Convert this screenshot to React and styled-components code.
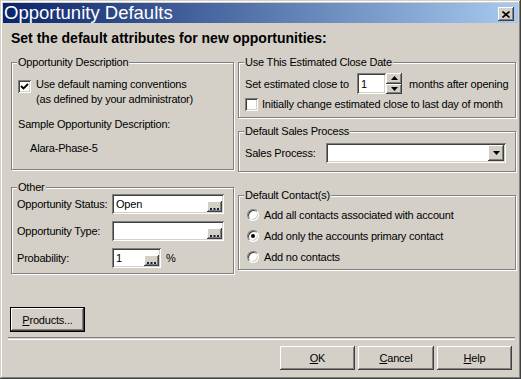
import React from "react";
import styled, { createGlobalStyle } from "styled-components";

const Global = createGlobalStyle`
  html, body { margin: 0; padding: 0; background: #d4d0c8; }
  body { font-family: "Liberation Sans", Arial, sans-serif; font-size: 11px; letter-spacing: -0.2px; color: #000; }
`;

const raised = `
  box-shadow: inset -1px -1px #404040, inset 1px 1px #fff, inset -2px -2px #808080, inset 2px 2px #d4d0c8;
`;
const sunken = `
  box-shadow: inset 1px 1px #808080, inset -1px -1px #fff, inset 2px 2px #404040, inset -2px -2px #d4d0c8;
`;

const Window = styled.div`
  width: 521px;
  height: 379px;
  box-sizing: border-box;
  padding: 3px;
  background: #d4d0c8;
  display: flex;
  flex-direction: column;
  box-shadow: inset -1px -1px #404040, inset 1px 1px #d4d0c8, inset -2px -2px #808080, inset 2px 2px #fff;
`;

const TitleBar = styled.div`
  height: 20px;
  flex: none;
  display: flex;
  align-items: center;
  padding: 0 4px 0 1px;
  background: linear-gradient(to right, #0a246a, #a6caf0);
  color: #fff;
`;

const TitleText = styled.div`
  flex: 1;
  font-size: 18.5px;
  letter-spacing: 0;
  line-height: 20px;
  white-space: nowrap;
`;

const CloseBtn = styled.div`
  width: 16px;
  height: 14px;
  align-self: flex-end;
  margin-bottom: 2px;
  background: #d4d0c8;
  display: flex;
  align-items: center;
  justify-content: center;
  ${raised}
`;

const Content = styled.div`
  flex: 1;
  display: flex;
  flex-direction: column;
  padding: 0 2px 6px 8px;
`;

const Heading = styled.div`
  margin-top: 7px;
  height: 16px;
  line-height: 16px;
  font-size: 14px;
  letter-spacing: 0;
  font-weight: bold;
  white-space: nowrap;
`;

const Columns = styled.div`
  display: flex;
  gap: 4px;
  margin-top: 16px;
`;

const Column = styled.div`
  width: ${(p) => p.$w}px;
  display: flex;
  flex-direction: column;
`;

const Group = styled.div`
  position: relative;
  box-sizing: border-box;
  height: ${(p) => p.$h}px;
  margin-top: ${(p) => p.$mt || 0}px;
  padding: ${(p) => p.$pad};
  border: 1px solid #808080;
  box-shadow: inset 1px 1px #fff, 1px 1px 0 #fff;
  display: flex;
  flex-direction: column;
`;

const Legend = styled.span`
  position: absolute;
  top: -7px;
  left: 5px;
  padding: 0 1px;
  line-height: 13px;
  background: #d4d0c8;
  white-space: nowrap;
`;

const Text = styled.div`
  line-height: 15px;
  white-space: nowrap;
  margin-top: ${(p) => p.$mt || 0}px;
  padding-left: ${(p) => p.$pl || 0}px;
`;

const CheckRow = styled.div`
  display: flex;
  align-items: flex-start;
  gap: ${(p) => p.$gap || 5}px;
  margin-top: ${(p) => p.$mt || 0}px;
`;

const CheckBox = styled.span`
  flex: none;
  width: 13px;
  height: 13px;
  box-sizing: border-box;
  margin-top: ${(p) => p.$mt || 0}px;
  background: #fff;
  display: flex;
  align-items: center;
  justify-content: center;
  ${sunken}
`;

const Row = styled.div`
  display: flex;
  align-items: center;
  height: ${(p) => p.$h || 20}px;
  margin-top: ${(p) => p.$mt || 0}px;
`;

const Label = styled.span`
  white-space: nowrap;
  width: ${(p) => (p.$w ? `${p.$w}px` : "auto")};
  flex: none;
  margin-left: ${(p) => p.$ml || 0}px;
`;

const Field = styled.div`
  flex: none;
  box-sizing: border-box;
  width: ${(p) => p.$w}px;
  height: ${(p) => p.$h || 20}px;
  background: #fff;
  display: flex;
  align-items: center;
  padding: 2px;
  ${sunken}
`;

const FieldText = styled.span`
  flex: 1;
  padding-left: 2px;
  line-height: 14px;
  white-space: nowrap;
`;

const DotsBtn = styled.span`
  flex: none;
  width: 15px;
  height: 11px;
  align-self: flex-end;
  background: #d4d0c8;
  display: flex;
  align-items: flex-end;
  justify-content: center;
  box-shadow: inset -1px -1px #404040, inset 1px 1px #fff, inset -2px -2px #808080;
`;

const Spin = styled.div`
  display: flex;
  flex: none;
  height: 21px;
  margin-right: 7px;
`;

const SpinBtns = styled.div`
  width: 16px;
  display: flex;
  flex-direction: column;
`;

const SpinBtn = styled.span`
  flex: 1;
  background: #d4d0c8;
  display: flex;
  align-items: center;
  justify-content: center;
  ${raised}
`;

const ComboBtn = styled.span`
  margin-left: auto;
  width: 16px;
  height: 16px;
  background: #d4d0c8;
  display: flex;
  align-items: center;
  justify-content: center;
  ${raised}
`;

const RadioRow = styled.div`
  display: flex;
  align-items: center;
  height: 21px;
  gap: 5px;
  white-space: nowrap;
`;

const Radio = styled.span`
  flex: none;
  width: 12px;
  height: 12px;
  box-sizing: border-box;
  border-radius: 50%;
  background: #fff;
  border: 1px solid;
  border-color: #808080 #fff #fff #808080;
  box-shadow: inset 1px 1px #404040, inset -1px -1px #d4d0c8;
  display: flex;
  align-items: center;
  justify-content: center;
  &::after {
    content: "";
    display: ${(p) => (p.$on ? "block" : "none")};
    width: 4px;
    height: 4px;
    border-radius: 50%;
    background: #000;
  }
`;

const Footer = styled.div`
  margin-top: auto;
  display: flex;
  flex-direction: column;
`;

const Button = styled.div`
  box-sizing: border-box;
  width: ${(p) => p.$w || 75}px;
  height: ${(p) => p.$h || 24}px;
  background: #d4d0c8;
  display: flex;
  align-items: center;
  justify-content: center;
  white-space: nowrap;
  ${(p) =>
    p.$default
      ? `border: 1px solid #000; box-shadow: inset -1px -1px #404040, inset 1px 1px #fff, inset -2px -2px #808080;`
      : raised}
  & u { text-decoration: underline; }
`;

const ProductsRow = styled.div`
  display: flex;
  margin-left: -1px;
`;

const Separator = styled.div`
  height: 1px;
  margin: 5px 1px 0 -3px;
  border-top: 1px solid #808080;
  border-bottom: 1px solid #fff;
`;

const ButtonRow = styled.div`
  display: flex;
  justify-content: flex-end;
  gap: 3px;
  margin: 6px 4px 0 0;
`;

const Check = () => (
  <svg width="9" height="9" viewBox="0 0 9 9">
    <path d="M1 4 L3.5 6.5 L8 2" fill="none" stroke="#000" strokeWidth="1.8" />
  </svg>
);

const Dots = () => (
  <svg width="11" height="5" viewBox="0 0 11 5">
    <rect x="1" y="1" width="2" height="2" fill="#102050" />
    <rect x="4.5" y="1" width="2" height="2" fill="#102050" />
    <rect x="8" y="1" width="2" height="2" fill="#102050" />
  </svg>
);

const Tri = ({ up, w = 7, h = 4 }) => (
  <svg width={w} height={h} viewBox={`0 0 ${w} ${h}`}>
    <path d={up ? `M0 ${h} L${w / 2} 0 L${w} ${h} Z` : `M0 0 L${w} 0 L${w / 2} ${h} Z`} fill="#000" />
  </svg>
);

export default function App() {
  return (
    <>
      <Global />
      <Window>
        <TitleBar>
          <TitleText>Opportunity Defaults</TitleText>
          <CloseBtn>
            <svg width="8" height="7" viewBox="0 0 8 7">
              <path d="M0.5 0.5 L7.5 6.5 M7.5 0.5 L0.5 6.5" stroke="#000" strokeWidth="1.6" />
            </svg>
          </CloseBtn>
        </TitleBar>
        <Content>
          <Heading>Set the default attributes for new opportunities:</Heading>
          <Columns>
            <Column $w={223}>
              <Group $h={108} $pad="14px 6px 0 6px">
                <Legend>Opportunity Description</Legend>
                <CheckRow>
                  <CheckBox $mt={3}>
                    <Check />
                  </CheckBox>
                  <div>
                    <Text>Use default naming conventions</Text>
                    <Text>(as defined by your administrator)</Text>
                  </div>
                </CheckRow>
                <Text $mt={10}>Sample Opportunity Description:</Text>
                <Text $mt={9} $pl={12}>Alara-Phase-5</Text>
              </Group>
              <Group $h={87} $mt={17} $pad="6px 5px 0 5px">
                <Legend>Other</Legend>
                <Row>
                  <Label $w={95}>Opportunity Status:</Label>
                  <Field $w={112}>
                    <FieldText>Open</FieldText>
                    <DotsBtn><Dots /></DotsBtn>
                  </Field>
                </Row>
                <Row $mt={7}>
                  <Label $w={95}>Opportunity Type:</Label>
                  <Field $w={112}>
                    <FieldText />
                    <DotsBtn><Dots /></DotsBtn>
                  </Field>
                </Row>
                <Row $mt={7}>
                  <Label $w={95}>Probability:</Label>
                  <Field $w={49}>
                    <FieldText>1</FieldText>
                    <DotsBtn><Dots /></DotsBtn>
                  </Field>
                  <Label $ml={5}>%</Label>
                </Row>
              </Group>
            </Column>
            <Column $w={278}>
              <Group $h={56} $pad="10px 6px 0 6px">
                <Legend>Use This Estimated Close Date</Legend>
                <Row $h={21}>
                  <Label $w={112}>Set estimated close to</Label>
                  <Spin>
                    <Field $w={29} $h={21}>
                      <FieldText>1</FieldText>
                    </Field>
                    <SpinBtns>
                      <SpinBtn><Tri up /></SpinBtn>
                      <SpinBtn><Tri /></SpinBtn>
                    </SpinBtns>
                  </Spin>
                  <Label>months after opening</Label>
                </Row>
                <CheckRow $mt={3} $gap={4}>
                  <CheckBox $mt={1} />
                  <Text>Initially change estimated close to last day of month</Text>
                </CheckRow>
              </Group>
              <Group $h={41} $mt={13} $pad="11px 6px 0 6px">
                <Legend>Default Sales Process</Legend>
                <Row>
                  <Label $w={81}>Sales Process:</Label>
                  <Field $w={180}>
                    <ComboBtn><Tri w={7} h={4} /></ComboBtn>
                  </Field>
                </Row>
              </Group>
              <Group $h={75} $mt={23} $pad="8px 8px 0 8px">
                <Legend>Default Contact(s)</Legend>
                <RadioRow>
                  <Radio />
                  Add all contacts associated with account
                </RadioRow>
                <RadioRow>
                  <Radio $on />
                  Add only the accounts primary contact
                </RadioRow>
                <RadioRow>
                  <Radio />
                  Add no contacts
                </RadioRow>
              </Group>
            </Column>
          </Columns>
          <Footer>
            <ProductsRow>
              <Button $default $w={75} $h={25}>
                <span><u>P</u>roducts...</span>
              </Button>
            </ProductsRow>
            <Separator />
            <ButtonRow>
              <Button $w={75}><span><u>O</u>K</span></Button>
              <Button $w={76}><span><u>C</u>ancel</span></Button>
              <Button $w={75}><span><u>H</u>elp</span></Button>
            </ButtonRow>
          </Footer>
        </Content>
      </Window>
    </>
  );
}
